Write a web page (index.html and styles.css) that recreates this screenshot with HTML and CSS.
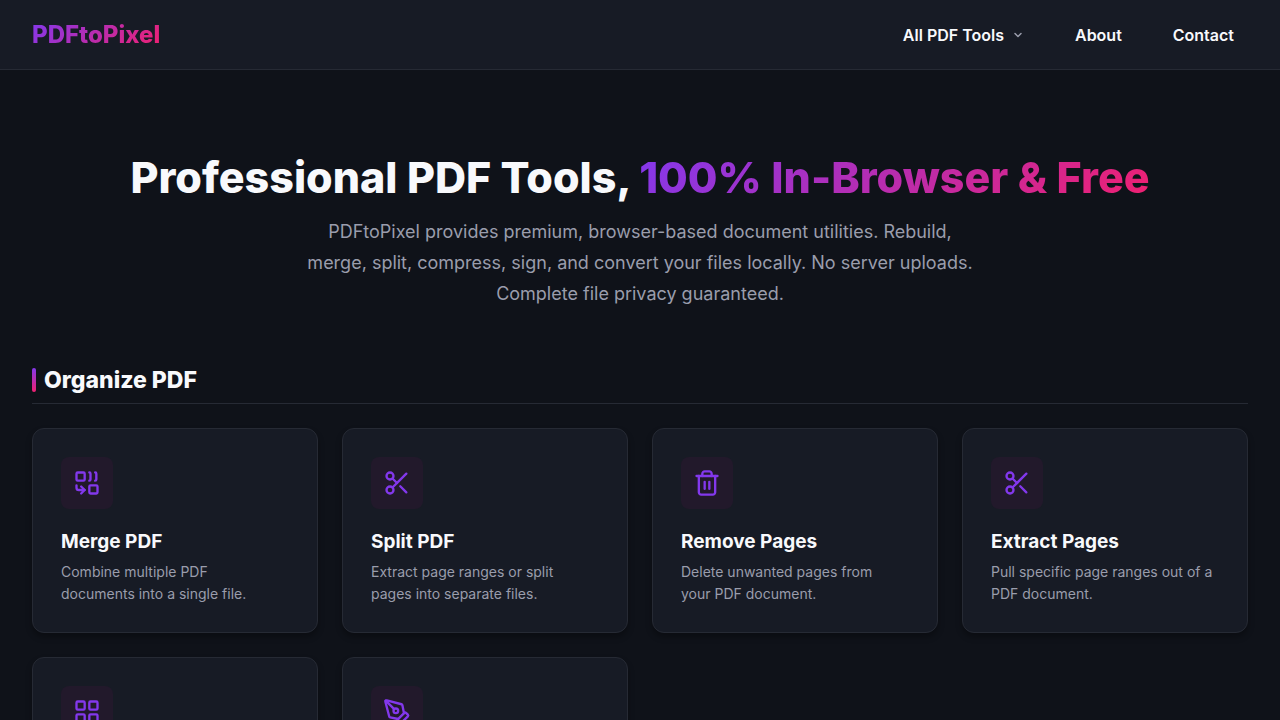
FILE: index.html
```html
<!DOCTYPE html>
<html lang="en">
<head>
  <meta charset="UTF-8">
  <meta name="viewport" content="width=device-width, initial-scale=1.0">
  <title>PDFtoPixel</title>
  <link rel="stylesheet" href="styles.css">
</head>
<body>
  <header class="site-header">
    <a class="logo gradient-text" href="#">PDFtoPixel</a>
    <nav class="nav">
      <button class="nav-link" type="button">
        All PDF Tools
        <svg class="chevron" viewBox="0 0 24 24" aria-hidden="true"><path d="m6 9 6 6 6-6"/></svg>
      </button>
      <a class="nav-link" href="#">About</a>
      <a class="nav-link" href="#">Contact</a>
    </nav>
  </header>

  <main>
    <section class="hero">
      <h1>Professional PDF Tools, <span class="gradient-text">100% In-Browser &amp; Free</span></h1>
      <p>PDFtoPixel provides premium, browser-based document utilities. Rebuild, merge, split, compress, sign, and convert your files locally. No server uploads. Complete file privacy guaranteed.</p>
    </section>

    <section class="tools">
      <h2 class="section-title">Organize PDF</h2>
      <div class="tool-grid">
        <a class="tool-card" href="#">
          <span class="tool-icon">
            <svg viewBox="0 0 24 24" aria-hidden="true">
              <path d="M14 3a1 1 0 0 1 1 1v5a1 1 0 0 1-1 1"/>
              <path d="M19 3a1 1 0 0 1 1 1v5a1 1 0 0 1-1 1"/>
              <path d="m7 15 3 3"/>
              <path d="m7 21 3-3H5a2 2 0 0 1-2-2v-2"/>
              <rect x="14" y="14" width="7" height="7" rx="1"/>
              <rect x="3" y="3" width="7" height="7" rx="1"/>
            </svg>
          </span>
          <h3>Merge PDF</h3>
          <p>Combine multiple PDF documents into a single file.</p>
        </a>

        <a class="tool-card" href="#">
          <span class="tool-icon">
            <svg viewBox="0 0 24 24" aria-hidden="true">
              <circle cx="6" cy="6" r="3"/>
              <path d="M8.12 8.12 12 12"/>
              <path d="M20 4 8.12 15.88"/>
              <circle cx="6" cy="18" r="3"/>
              <path d="M14.8 14.8 20 20"/>
            </svg>
          </span>
          <h3>Split PDF</h3>
          <p>Extract page ranges or split pages into separate files.</p>
        </a>

        <a class="tool-card" href="#">
          <span class="tool-icon">
            <svg viewBox="0 0 24 24" aria-hidden="true">
              <path d="M3 6h18"/>
              <path d="M19 6v14c0 1-1 2-2 2H7c-1 0-2-1-2-2V6"/>
              <path d="M8 6V4c0-1 1-2 2-2h4c1 0 2 1 2 2v2"/>
              <path d="M10 11v6"/>
              <path d="M14 11v6"/>
            </svg>
          </span>
          <h3>Remove Pages</h3>
          <p>Delete unwanted pages from your PDF document.</p>
        </a>

        <a class="tool-card" href="#">
          <span class="tool-icon">
            <svg viewBox="0 0 24 24" aria-hidden="true">
              <circle cx="6" cy="6" r="3"/>
              <path d="M8.12 8.12 12 12"/>
              <path d="M20 4 8.12 15.88"/>
              <circle cx="6" cy="18" r="3"/>
              <path d="M14.8 14.8 20 20"/>
            </svg>
          </span>
          <h3>Extract Pages</h3>
          <p>Pull specific page ranges out of a PDF document.</p>
        </a>

        <a class="tool-card" href="#" aria-label="Organize pages">
          <span class="tool-icon">
            <svg viewBox="0 0 24 24" aria-hidden="true">
              <rect x="3" y="3" width="7" height="7" rx="1"/>
              <rect x="14" y="3" width="7" height="7" rx="1"/>
              <rect x="14" y="14" width="7" height="7" rx="1"/>
              <rect x="3" y="14" width="7" height="7" rx="1"/>
            </svg>
          </span>
        </a>

        <a class="tool-card" href="#" aria-label="Sign PDF">
          <span class="tool-icon">
            <svg viewBox="0 0 24 24" aria-hidden="true">
              <path d="M15.707 21.293a1 1 0 0 1-1.414 0l-1.586-1.586a1 1 0 0 1 0-1.414l5.586-5.586a1 1 0 0 1 1.414 0l1.586 1.586a1 1 0 0 1 0 1.414z"/>
              <path d="m18 13-1.375-6.874a1 1 0 0 0-.746-.776L3.235 2.028a1 1 0 0 0-1.207 1.207L5.35 15.879a1 1 0 0 0 .776.746L13 18"/>
              <path d="m2.3 2.3 7.286 7.286"/>
              <circle cx="11" cy="11" r="2"/>
            </svg>
          </span>
        </a>
      </div>
    </section>
  </main>
</body>
</html>
```
FILE: styles.css
```css
:root {
  --bg: #0f1219;
  --surface: #171b25;
  --border: #262a34;
  --text: #f8f9fc;
  --muted: #9a9dac;
  --purple: #8338ec;
  --pink: #f02070;
}

* {
  box-sizing: border-box;
}

body {
  margin: 0;
  background-color: var(--bg);
  color: var(--text);
  font-family: Inter, sans-serif;
}

a {
  color: inherit;
  text-decoration: none;
}

h1, h2, h3, p {
  margin: 0;
}

svg {
  fill: none;
  stroke: currentColor;
  stroke-width: 2;
  stroke-linecap: round;
  stroke-linejoin: round;
}

.gradient-text {
  background: linear-gradient(135deg, var(--purple), var(--pink));
  -webkit-background-clip: text;
  background-clip: text;
  color: transparent;
}

.site-header {
  display: flex;
  align-items: center;
  justify-content: space-between;
  height: 70px;
  padding: 0 32px;
  background-color: var(--surface);
  border-bottom: 1px solid var(--border);
}

.logo {
  font-size: 24px;
  font-weight: 800;
}

.nav {
  display: flex;
  gap: 23px;
}

.nav-link {
  display: flex;
  align-items: center;
  gap: 8px;
  padding: 8px 14px;
  border: none;
  background: none;
  color: var(--text);
  font-family: inherit;
  font-size: 16px;
  font-weight: 600;
  cursor: pointer;
}

.chevron {
  width: 12px;
  height: 12px;
  color: var(--muted);
  stroke-width: 3;
}

.hero {
  padding: 80px 32px 0;
  text-align: center;
}

.hero h1 {
  font-size: 43px;
  font-weight: 800;
  line-height: 54px;
}

.hero p {
  max-width: 680px;
  margin: 12px auto 0;
  color: var(--muted);
  font-size: 18px;
  line-height: 31px;
}

.tools {
  padding: 56px 32px 48px;
}

.section-title {
  display: flex;
  align-items: center;
  gap: 8px;
  padding-bottom: 8px;
  border-bottom: 1px solid var(--border);
  font-size: 23px;
  font-weight: 800;
  line-height: 30px;
}

.section-title::before {
  content: "";
  width: 4px;
  height: 24px;
  border-radius: 2px;
  background: linear-gradient(180deg, var(--purple), var(--pink));
}

.tool-grid {
  display: grid;
  grid-template-columns: repeat(4, 1fr);
  gap: 24px;
  margin-top: 24px;
}

.tool-card {
  min-height: 205px;
  padding: 28px 28px 27px;
  background-color: var(--surface);
  border: 1px solid var(--border);
  border-radius: 12px;
  box-shadow: 0 4px 6px rgba(0, 0, 0, 0.3);
}

.tool-icon {
  display: flex;
  align-items: center;
  justify-content: center;
  width: 52px;
  height: 52px;
  border-radius: 8px;
  background-color: #22192b;
  color: var(--purple);
}

.tool-icon svg {
  width: 28px;
  height: 28px;
}

.tool-card h3 {
  margin-top: 21px;
  font-size: 19px;
  font-weight: 700;
  line-height: 24px;
}

.tool-card p {
  margin-top: 7px;
  padding-right: 6px;
  color: var(--muted);
  font-size: 14px;
  line-height: 22px;
}

@media (max-width: 1000px) {
  .tool-grid {
    grid-template-columns: repeat(2, 1fr);
  }
}
```
